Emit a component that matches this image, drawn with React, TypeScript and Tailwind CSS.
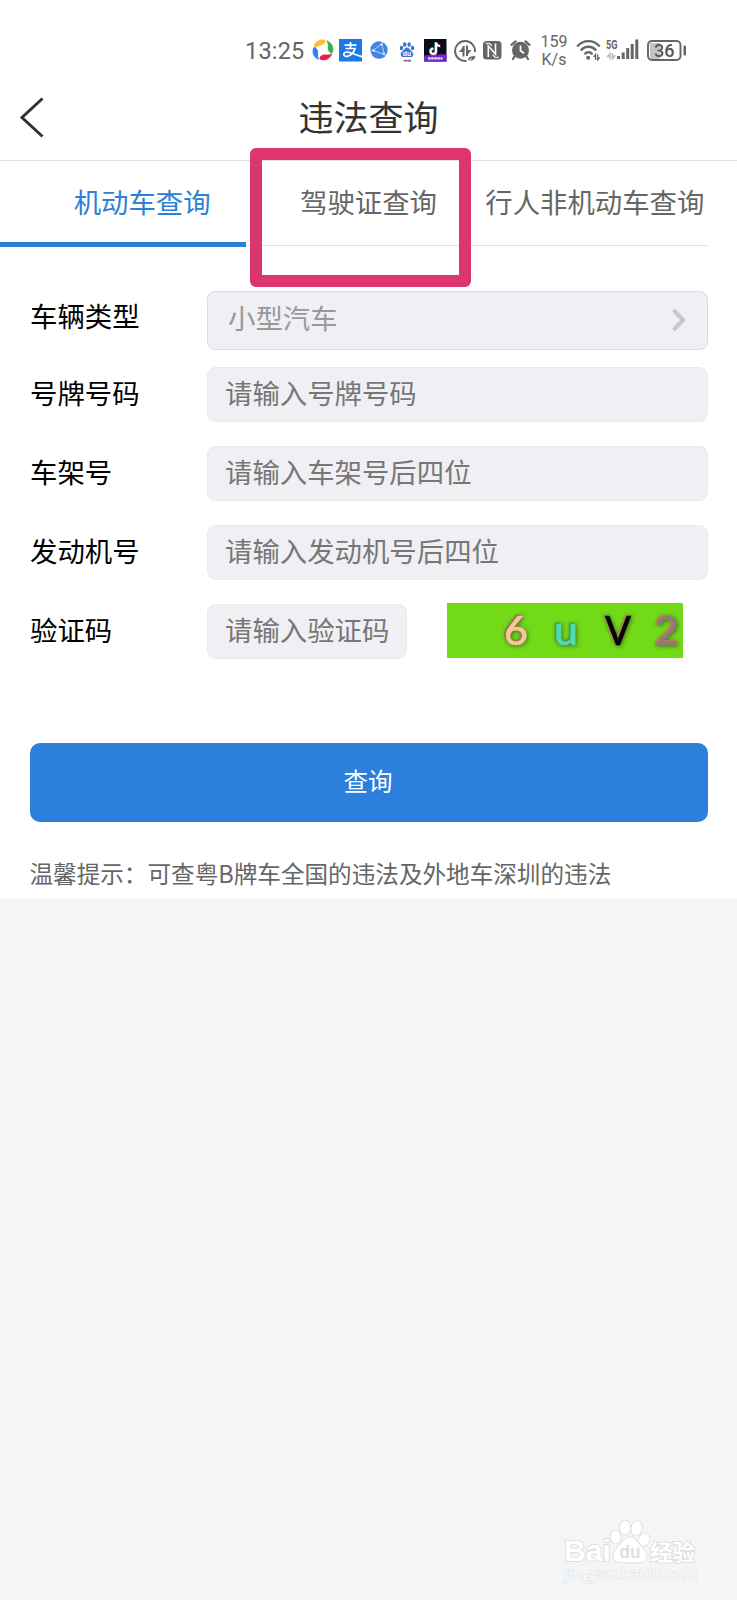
import { useState } from "react";

const tabs = ["机动车查询", "驾驶证查询", "行人非机动车查询"];

const fields = [
  { label: "号牌号码", placeholder: "请输入号牌号码" },
  { label: "车架号", placeholder: "请输入车架号后四位" },
  { label: "发动机号", placeholder: "请输入发动机号后四位" },
];

const inputStyle =
  "block rounded-[9px] border border-[#e9e9ee] bg-[#efeff4] pl-[17px] pb-[5px] text-[27.4px] text-[#777777] placeholder:text-[#777777] placeholder:opacity-100 outline-none";

function StatusBar() {
  return (
    <div className="flex h-20 items-start pl-[245px] pt-[39px] text-[#666]">
      <span className="w-[66px] font-[Roboto,sans-serif] text-[23.5px] leading-[25px] tracking-[0.2px]">13:25</span>

      {/* app notifications */}
      <svg className="ml-px shrink-0" width="22" height="22" viewBox="0 0 22 22">
        <path d="M2 10.500C1 5 4.500 1.300 9.500.6c2.400-.3 4 .4 4 2.200C12.300 5.300 10 6.600 7.500 6.700 5 7 3.500 8.300 2 10.500z" fill="#f5c22c" />
        <path d="M14 1.200c4.600 1.400 7.400 4.900 7.300 9.600-.1 2.400-1 3.600-2.800 3.400-2.200-2-3-4.200-2.600-6.800.3-2.300-.5-4.400-1.900-6.200z" fill="#36b44a" />
        <path d="M20.500 14c-1.400 4.700-4.800 7.200-9.500 7.300-2.400 0-3.700-.9-3.500-2.700 1.500-2.300 3.600-3.400 6.500-3 2.500.3 4.700-.2 6.500-1.600z" fill="#e8204f" />
        <path d="M7.300 20.800C2.900 19.500.4 16 .6 11.500c.1-2.400 1.200-3.500 2.900-3.200 2 2 3 4 2.600 6.600-.2 2.300.1 4.300 1.200 5.900z" fill="#2e7ff0" />
      </svg>
      <svg className="ml-[5px] shrink-0" width="23" height="23" viewBox="0 0 23 23">
        <rect width="23" height="22.500" fill="#1d78e8" />
        <path d="M5.500 6.200h12M11.500 3v6.500M6.500 9.500h9.500c-1 3.200-3.500 6.800-7.200 7.800-2.200.5-4-.4-4-2 0-1.700 1.800-2.600 4-2.200 3.200.6 7 2.600 14.200 4.600" fill="none" stroke="#fff" strokeWidth="1.700" />
      </svg>
      <svg className="ml-[8px] mt-[2px] shrink-0" width="18" height="18" viewBox="0 0 18 18">
        <circle cx="9" cy="9" r="8.700" fill="#3f87e0" />
        <path d="M3 9.500 11.500 3 14.500 13.500zM11.500 3 13 1M14.500 13.500 16 15M3 9.500.5 9" fill="none" stroke="#b9d7f8" strokeWidth="1" />
        <circle cx="3.500" cy="9.500" r="1.300" fill="#d5e7fb" />
        <circle cx="11.500" cy="3.500" r="1.200" fill="#d5e7fb" />
        <circle cx="14" cy="13" r="1.200" fill="#d5e7fb" />
      </svg>
      <svg className="ml-[11px] mt-[3px] shrink-0" width="16" height="21" viewBox="0 0 15 21">
        <g fill="#3674cf">
          <ellipse cx="1.900" cy="6" rx="1.700" ry="2.200" />
          <ellipse cx="5.200" cy="2.600" rx="1.700" ry="2.300" />
          <ellipse cx="9.600" cy="2.600" rx="1.700" ry="2.300" />
          <ellipse cx="13" cy="6" rx="1.700" ry="2.200" />
          <path d="M7.500 5.500c2 0 2.600 2 4 3.300 1.500 1.300 2.500 2.400 2.300 4-.2 1.800-1.600 2.500-3.200 2.300-2.200-.3-4-.3-6.200 0-1.600.2-3-.5-3.200-2.300-.2-1.600.8-2.700 2.300-4 1.400-1.300 2-3.300 4-3.300z" />
        </g>
        <text x="7.500" y="13.500" textAnchor="middle" fontFamily="Liberation Sans, sans-serif" fontSize="7" fontWeight="bold" fill="#fff">du</text>
        <path d="M4 18.700h4" stroke="#d8555b" strokeWidth="1.800" />
        <path d="M8 18.700h3.500" stroke="#4a72c8" strokeWidth="1.800" />
      </svg>
      <svg className="ml-[9px] shrink-0" width="23" height="23" viewBox="0 0 23 23">
        <rect width="22.500" height="22.500" fill="#0c0b18" />
        <path d="M0 16.500 22.500 15v7.500H0z" fill="#6a2bc4" />
        <path d="M12 3.500v8.800a2.700 2.700 0 1 1-2.700-2.700" transform="translate(-.6 -.4)" fill="none" stroke="#35dbe2" strokeWidth="2" />
        <path d="M12 3.500v8.800a2.700 2.700 0 1 1-2.700-2.700M12 3.500c.3 2.200 1.800 3.500 4 3.600" transform="translate(.6 .4)" fill="none" stroke="#e8385f" strokeWidth="2" />
        <path d="M12 3.500v8.800a2.700 2.700 0 1 1-2.700-2.700M12 3.500c.3 2.200 1.800 3.500 4 3.600" fill="none" stroke="#fff" strokeWidth="2" />
        <path d="M4 19.300h14.500" stroke="#eadcff" strokeWidth="2.200" strokeDasharray="2.600 .5" />
      </svg>

      {/* system icons */}
      <svg className="ml-[7px] mt-px shrink-0" width="23" height="23" viewBox="0 0 23 23" fill="none" stroke="#666">
        <path d="M21 12A10 10 0 1 0 12.500 20.900" strokeWidth="2" />
        <path d="M9.500 16.500V6M13 5.500V16" strokeWidth="2" />
        <path d="M10.300 5.500v6.500H5zM12.200 16.500V10H17.500z" fill="#666" stroke="none" />
        <path d="M13.800 20.500c-.3-3.500 2.700-5.200 8-4.800-.4 3.700-3.300 6.400-8 4.800z" fill="#666" stroke="#fff" strokeWidth=".8" />
        <path d="m13 21.800 5-3.600" stroke="#fff" strokeWidth=".8" />
      </svg>
      <svg className="ml-[6px] mt-[2px] shrink-0" width="19" height="19" viewBox="0 0 19 19">
        <rect x="0" y="0" width="18.500" height="18.500" rx="3.500" fill="#666" />
        <path d="M5.300 16V4.800l7.200 8.400V2.500" fill="none" stroke="#fff" strokeWidth="1.600" />
        <path d="M2.500 2.300h4l2.300 2.500M16 16.200h-4l-2.300-2.500" fill="none" stroke="#fff" strokeWidth="1.100" />
      </svg>
      <svg className="ml-[8px] mt-px shrink-0" width="21" height="20" viewBox="0 0 21 20">
        <circle cx="10.500" cy="10.300" r="8.500" fill="#666" />
        <path d="M1.500 4.800 5.500 1.300M19.500 4.800l-4-3.500M4.500 16.500 3 19M16.500 16.500 18 19" stroke="#666" strokeWidth="2.200" strokeLinecap="round" />
        <path d="M10.500 5.500v5.300l3.700 2.500" fill="none" stroke="#fff" strokeWidth="1.700" />
      </svg>
      <div className="ml-[7px] mt-[-6px] w-[32px] text-center font-[Roboto,sans-serif] text-[16px] leading-[18px]">
        159
        <br />
        K/s
      </div>
      <svg className="ml-[6px] shrink-0" width="26" height="22" viewBox="0 0 26 22" fill="none" stroke="#666">
        <path d="M1.200 7.500c6.200-7.300 16.300-7.300 22.500 0" strokeWidth="2.300" />
        <path d="M4.800 11.500c4.300-5 11-5 15.400 0" strokeWidth="2.300" />
        <path d="M8.500 15.200c2.500-2.700 5.500-2.700 8 0" strokeWidth="2.300" />
        <circle cx="12.200" cy="18.700" r="2" fill="#666" stroke="none" />
        <path d="M19.600 21v-5.500l-1.800 2.500M21.700 15.500V21l2-2.700" strokeWidth="1.300" />
      </svg>
      <svg className="ml-[4px] shrink-0" width="34" height="23" viewBox="0 0 34 23">
        <text x="0" y="10" textLength="11.500" lengthAdjust="spacingAndGlyphs" fontFamily="Roboto, sans-serif" fontSize="12.500" fontWeight="bold" fill="#666">5G</text>
        <path d="M4 20.500v-6l-2.500 3H4M6.300 14v6l2.500-3H6.300" fill="none" stroke="#bbb" strokeWidth="1.400" />
        <g fill="#666">
          <rect x="11" y="17" width="3" height="3" />
          <rect x="15.700" y="13.500" width="3" height="6.500" />
          <rect x="20.200" y="9" width="3" height="11" />
          <rect x="24.700" y="5" width="3" height="15" />
          <rect x="29.300" y=".5" width="3" height="19.500" />
        </g>
      </svg>
      <svg className="ml-[7px] mt-px shrink-0" width="40" height="22" viewBox="0 0 40 22">
        <rect x="3" y="3" width="10" height="16" fill="#c4c4c4" />
        <rect x="1" y="1" width="32.500" height="19" rx="4" fill="none" stroke="#666" strokeWidth="1.900" />
        <rect x="36.500" y="5.500" width="2.500" height="10" rx="1" fill="#666" />
        <text x="17.300" y="17" textAnchor="middle" fontFamily="Roboto, sans-serif" fontSize="18" fontWeight="500" fill="#555">36</text>
      </svg>
    </div>
  );
}

function Captcha() {
  return (
    <div className="-mt-[2px] ml-[40px] h-[55px] w-[236px] bg-[#72da17]">
      <svg width="236" height="55" viewBox="0 0 236 55" fontFamily="Lato, sans-serif" fontWeight="500" fontSize="41" className="overflow-visible [filter:drop-shadow(1px_1px_2px_#333a)]">
        <g strokeWidth=".6">
          <text x="55.500" y="41" textLength="24" lengthAdjust="spacingAndGlyphs" fill="#9b7053" stroke="#9b7053">6</text>
          <text x="105.500" y="41" textLength="24" lengthAdjust="spacingAndGlyphs" fill="#4d8a71" stroke="#4d8a71">u</text>
          <text x="156.500" y="41" textLength="26" lengthAdjust="spacingAndGlyphs" fill="#b2895c" stroke="#b2895c">V</text>
          <text x="206.500" y="41" textLength="24" lengthAdjust="spacingAndGlyphs" fill="#b6835e" stroke="#b6835e">2</text>
          <text x="57" y="42" textLength="24" lengthAdjust="spacingAndGlyphs" fill="#f6c899" stroke="#f6c899">6</text>
          <text x="107" y="42" textLength="24" lengthAdjust="spacingAndGlyphs" fill="#4fdcae" stroke="#4fdcae">u</text>
          <text x="158" y="42" textLength="26" lengthAdjust="spacingAndGlyphs" fill="#050505" stroke="#050505">V</text>
          <text x="208" y="42" textLength="24" lengthAdjust="spacingAndGlyphs" fill="#957874" stroke="#957874">2</text>
        </g>
      </svg>
    </div>
  );
}

function Watermark() {
  return (
    <svg className="absolute left-[560px] top-[1515px]" width="145" height="75" viewBox="0 0 145 75">
      <g fill="#fff" stroke="#dedede" strokeWidth="1.800" paintOrder="stroke">
        <text x="4" y="46" textLength="47" lengthAdjust="spacingAndGlyphs" fontFamily="Liberation Sans, sans-serif" fontSize="30" fontWeight="bold">Bai</text>
        <ellipse cx="55.500" cy="22" rx="5" ry="6.500" transform="rotate(-12 55.500 22)" />
        <ellipse cx="65" cy="12.500" rx="5.200" ry="7" />
        <ellipse cx="76.500" cy="13.500" rx="5.200" ry="7" transform="rotate(10 76.500 13.500)" />
        <ellipse cx="84" cy="24.500" rx="5" ry="6.300" transform="rotate(20 84 24.500)" />
        <path d="M70 22.500c5 0 7 4 10 7.500s7 6.500 6.500 11c-.5 5-4 6.500-8.500 6.300H62c-4.500.2-8-1.300-8.500-6.300-.5-4.500 3.500-7.500 6.500-11s5-7.500 10-7.500z" />
        <text x="90" y="45" textLength="45" lengthAdjust="spacingAndGlyphs" fontFamily="Noto Sans CJK SC, sans-serif" fontSize="22" fontWeight="bold">经验</text>
        <text x="5" y="64" textLength="132" lengthAdjust="spacingAndGlyphs" fontFamily="Open Sans, sans-serif" fontSize="15" strokeWidth="1.200">jingyan.baidu.com</text>
      </g>
      <text x="59.500" y="43" textLength="21" lengthAdjust="spacingAndGlyphs" fontFamily="Liberation Sans, sans-serif" fontSize="19" fontWeight="bold" fill="#dedede">du</text>
    </svg>
  );
}

export default function App() {
  const [activeTab, setActiveTab] = useState(0);

  return (
    <div className="relative h-[1600px] w-[737px] overflow-hidden bg-[#f5f5f5] font-['Noto_Sans_CJK_SC',sans-serif]">
      <div className="h-[899px] bg-white">
        <StatusBar />

        {/* Header */}
        <header className="grid h-[81px] grid-cols-[80px_1fr_80px] items-center border-b border-[#e2e2e2]">
          <button className="pb-[4px] pl-[19px]">
            <svg width="26" height="42" viewBox="0 0 26 42" fill="none" stroke="#333" strokeWidth="3">
              <path d="M23.500 1.500 3 20.500l20.500 19" />
            </svg>
          </button>
          <h1 className="pb-[9px] text-center text-[35px] leading-[50px] text-[#333]">违法查询</h1>
        </header>

        {/* Tabs */}
        <div className="relative ml-[29px] mr-[29px] flex h-[85px] border-b border-[#e2e2e2]">
          {tabs.map((tab, index) => (
            <button
              key={tab}
              onClick={() => setActiveTab(index)}
              className={`flex-1 whitespace-nowrap pb-[3px] text-[27.4px] ${activeTab === index ? "text-[#2c80d8]" : "text-[#666]"}`}
            >
              {tab}
            </button>
          ))}
          <div className="absolute -bottom-[2px] -left-[29px] h-[5px] w-[246px] bg-[#2c80d8]"></div>
          {/* highlight on the licence tab */}
          <div className="pointer-events-none absolute -top-[13px] left-[221px] h-[139px] w-[221px] rounded-[6px] border-[12px] border-[#dc3570]"></div>
        </div>

        {/* Form */}
        <div className="px-[29px] pt-[44px] text-[27.4px]">
          <div className="flex h-[60px] items-center">
            <label className="w-[178px] pb-[8px] pl-px">车辆类型</label>
            <div className="flex h-[59px] flex-1 items-center justify-between rounded-[8px] border border-[#dcdce0] bg-[#efeff4] pl-[20px] pr-[20px] text-[#999]">
              <span className="pb-[5px]">小型汽车</span>
              <svg width="16" height="24" viewBox="0 0 16 24" fill="none" stroke="#c7c7cc" strokeWidth="4">
                <path d="m2.500 2 9.500 10-9.500 10" />
              </svg>
            </div>
          </div>

          <div className="mt-[17px] flex flex-col gap-[24px]">
            {fields.map((field) => (
              <div key={field.label} className="flex h-[55px] items-center">
                <label className="w-[178px] pb-[4px] pl-px">{field.label}</label>
                <input className={`${inputStyle} h-[55px] w-[501px]`} placeholder={field.placeholder} />
              </div>
            ))}
            <div className="flex h-[55px] items-center">
              <label className="w-[178px] pb-[4px] pl-px">验证码</label>
              <input className={`${inputStyle} h-[55px] w-[200px]`} placeholder="请输入验证码" />
              <Captcha />
            </div>
          </div>

          <button className="ml-px mt-[84px] block h-[79px] w-[678px] rounded-[10px] bg-[#2c80dc] pb-[2px] pr-[2px] text-[24.5px] text-white">查询</button>
          <p className="mt-[34px] pl-[0.5px] text-[23.6px] leading-[34px] text-[#666]">温馨提示：可查粤B牌车全国的违法及外地车深圳的违法</p>
        </div>
      </div>

      <Watermark />
    </div>
  );
}
